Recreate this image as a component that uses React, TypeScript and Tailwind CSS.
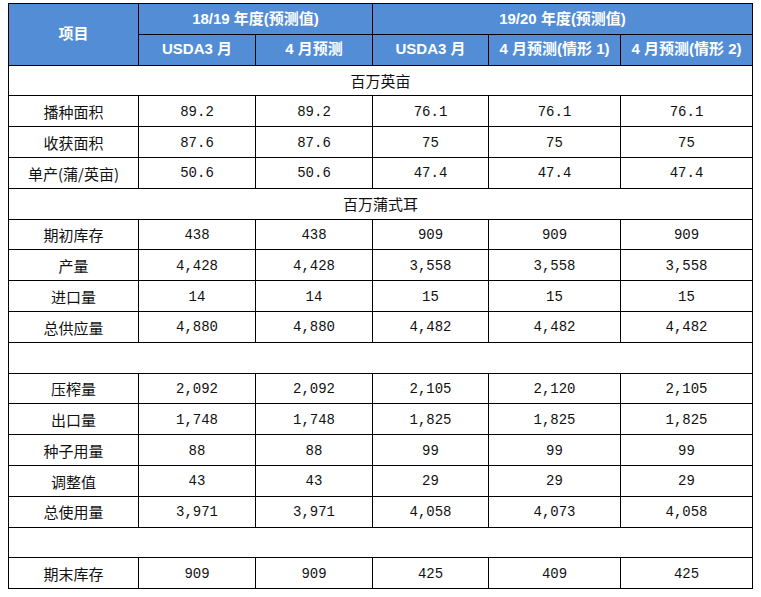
import React from 'react';

const cjk = { fontFamily: '"Noto Sans CJK SC", sans-serif' };
const num = { fontFamily: '"Liberation Mono", "Noto Sans CJK SC", monospace' };

type Row =
  | { kind: 'section'; label: string }
  | { kind: 'data'; label: string; values: string[] };

const rows: Row[] = [
  { kind: 'section', label: '百万英亩' },
  { kind: 'data', label: '播种面积', values: ['89.2', '89.2', '76.1', '76.1', '76.1'] },
  { kind: 'data', label: '收获面积', values: ['87.6', '87.6', '75', '75', '75'] },
  { kind: 'data', label: '单产(蒲/英亩)', values: ['50.6', '50.6', '47.4', '47.4', '47.4'] },
  { kind: 'section', label: '百万蒲式耳' },
  { kind: 'data', label: '期初库存', values: ['438', '438', '909', '909', '909'] },
  { kind: 'data', label: '产量', values: ['4,428', '4,428', '3,558', '3,558', '3,558'] },
  { kind: 'data', label: '进口量', values: ['14', '14', '15', '15', '15'] },
  { kind: 'data', label: '总供应量', values: ['4,880', '4,880', '4,482', '4,482', '4,482'] },
  { kind: 'section', label: '' },
  { kind: 'data', label: '压榨量', values: ['2,092', '2,092', '2,105', '2,120', '2,105'] },
  { kind: 'data', label: '出口量', values: ['1,748', '1,748', '1,825', '1,825', '1,825'] },
  { kind: 'data', label: '种子用量', values: ['88', '88', '99', '99', '99'] },
  { kind: 'data', label: '调整值', values: ['43', '43', '29', '29', '29'] },
  { kind: 'data', label: '总使用量', values: ['3,971', '3,971', '4,058', '4,073', '4,058'] },
  { kind: 'section', label: '' },
  { kind: 'data', label: '期末库存', values: ['909', '909', '425', '409', '425'] },
];

const head = 'border border-black bg-[#538dd5] text-white font-bold text-[15px] h-[30.8px] p-0 text-center';
const cell = 'border border-black h-[30.8px] p-0 pt-[2px] text-center text-[14px] text-[#111]';
const label = 'border border-black h-[30.8px] p-0 pt-[2px] text-center text-[15px] text-[#111]';

export default function App() {
  return (
    <div className="bg-white w-[761px] h-[597px] pt-[3px] pl-[8px]">
      <table className="border-collapse table-fixed w-[744px]" style={{ fontFamily: '"Liberation Sans", "Noto Sans CJK SC", sans-serif' }}>
        <colgroup>
          <col className="w-[130px]" />
          <col className="w-[117px]" />
          <col className="w-[117px]" />
          <col className="w-[116px]" />
          <col className="w-[132px]" />
          <col className="w-[132px]" />
        </colgroup>
        <thead>
          <tr>
            <th rowSpan={2} className={head}>项目</th>
            <th colSpan={2} className={head}>18/19 年度(预测值)</th>
            <th colSpan={3} className={head}>19/20 年度(预测值)</th>
          </tr>
          <tr>
            <th className={head}>USDA3 月</th>
            <th className={head}>4 月预测</th>
            <th className={head}>USDA3 月</th>
            <th className={head}>4 月预测(情形 1)</th>
            <th className={head}>4 月预测(情形 2)</th>
          </tr>
        </thead>
        <tbody>
          {rows.map((r, i) =>
            r.kind === 'section' ? (
              <tr key={i}>
                <td colSpan={6} className={label} style={cjk}>{r.label}</td>
              </tr>
            ) : (
              <tr key={i}>
                <td className={label} style={cjk}>{r.label}</td>
                {r.values.map((v, j) => (
                  <td key={j} className={cell} style={num}>{v}</td>
                ))}
              </tr>
            )
          )}
        </tbody>
      </table>
    </div>
  );
}
